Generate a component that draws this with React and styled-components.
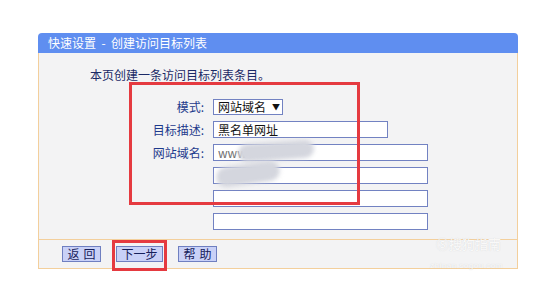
import React from 'react';
import styled, { createGlobalStyle } from 'styled-components';

const GlobalStyle = createGlobalStyle`
  body {
    margin: 0;
    background: #ffffff;
    font-family: "Noto Sans CJK SC", "Liberation Sans", sans-serif;
  }
`;

const Page = styled.div`
  position: relative;
  width: 537px;
  height: 292px;
  padding: 33px 0 0 38px;
  box-sizing: border-box;
`;

const Panel = styled.div`
  width: 480px;
`;

const Header = styled.div`
  height: 20px;
  background: #5f8ef0;
  border-radius: 4px 4px 0 0;
  color: #ffffff;
  font-size: 12px;
  line-height: 20px;
  padding-left: 10px;
  white-space: pre;
`;

const Body = styled.div`
  background: #f3f3f4;
  border-left: 1px solid #f3cf9c;
  border-right: 1px solid #f3cf9c;
  padding: 14px 0 9px;
`;

const Intro = styled.div`
  font-size: 12px;
  line-height: 16px;
  color: #1b2a66;
  padding-left: 51px;
  margin-bottom: 15px;
`;

const Form = styled.div`
  display: grid;
  grid-template-columns: 165px auto;
  column-gap: 9px;
  row-gap: 6px;
  align-items: center;
`;

const Label = styled.div`
  grid-column: 1;
  text-align: right;
  font-size: 12px;
  line-height: 17px;
  color: #1e3a8c;
`;

const Field = styled.div`
  grid-column: 2;
  width: ${(p) => p.$w}px;
  height: ${(p) => p.$h || 17}px;
  box-sizing: border-box;
  background: #ffffff;
  border: 1px solid #7282c2;
  font-size: 12px;
  line-height: ${(p) => (p.$h || 17) - 2}px;
  padding-left: 4px;
  color: ${(p) => (p.$muted ? '#707070' : '#111111')};
  display: flex;
  align-items: center;
  gap: 6px;
  white-space: nowrap;
`;

const Arrow = styled.span`
  font-size: 8px;
  color: #111;
`;

const Footer = styled.div`
  height: 28px;
  background: #f3f3f4;
  border: 1px solid #f3cf9c;
  display: flex;
  align-items: center;
  gap: 15px;
  padding-left: 23px;
`;

const Button = styled.div`
  width: ${(p) => p.$w}px;
  height: 16px;
  box-sizing: border-box;
  background: #c9d1f7;
  border: 1px solid #6f7fc0;
  color: #16205a;
  font-size: 12px;
  line-height: 14px;
  text-align: center;
  white-space: nowrap;
  letter-spacing: ${(p) => (p.$spaced ? '4px' : '0')};
  text-indent: ${(p) => (p.$spaced ? '4px' : '0')};
`;

const Mark = styled.div`
  position: absolute;
  left: ${(p) => p.$x}px;
  top: ${(p) => p.$y}px;
  width: ${(p) => p.$w}px;
  height: ${(p) => p.$h}px;
  border: 3px solid #e53a40;
  box-sizing: border-box;
  pointer-events: none;
`;

const Smudge = styled.div`
  position: absolute;
  left: ${(p) => p.$x}px;
  top: ${(p) => p.$y}px;
  width: ${(p) => p.$w}px;
  height: ${(p) => p.$h}px;
  background: #d4d6de;
  border-radius: 12px;
  filter: blur(2px);
  transform: rotate(${(p) => p.$r}deg);
`;

const Watermark = styled.div`
  position: absolute;
  left: 436px;
  top: 237px;
  color: rgba(255, 255, 255, 0.9);
  text-shadow: 0 0 1px rgba(190, 190, 190, 0.7);
  font-size: 13px;
  line-height: 14px;
`;

const WatermarkUrl = styled.div`
  font-family: "Liberation Sans", sans-serif;
  font-size: 8px;
  letter-spacing: 0.5px;
  margin-top: 8px;
  margin-left: -6px;
`;

export default function App() {
  return (
    <>
      <GlobalStyle />
      <Page>
        <Panel>
          <Header>快速设置  -  创建访问目标列表</Header>
          <Body>
            <Intro>本页创建一条访问目标列表条目。</Intro>
            <Form>
              <Label>模式:</Label>
              <Field $w={70} $h={16}>
                网站域名<Arrow>▼</Arrow>
              </Field>
              <Label>目标描述:</Label>
              <Field $w={175}>黑名单网址</Field>
              <Label>网站域名:</Label>
              <Field $w={215} $muted>www</Field>
              <Field $w={215} />
              <Field $w={215} />
              <Field $w={215} />
            </Form>
          </Body>
          <Footer>
            <Button $w={39} $spaced>返回</Button>
            <Button $w={47}>下一步</Button>
            <Button $w={39} $spaced>帮助</Button>
          </Footer>
        </Panel>
        <Smudge $x={238} $y={142} $w={76} $h={18} $r={-4} />
        <Smudge $x={216} $y={164} $w={64} $h={20} $r={-8} />
        <Mark $x={129} $y={82} $w={231} $h={123} />
        <Mark $x={112} $y={240} $w={55} $h={31} />
        <Watermark>
          Ⓢ搜狗指南
          <WatermarkUrl>zhinan.sogou.com</WatermarkUrl>
        </Watermark>
      </Page>
    </>
  );
}
